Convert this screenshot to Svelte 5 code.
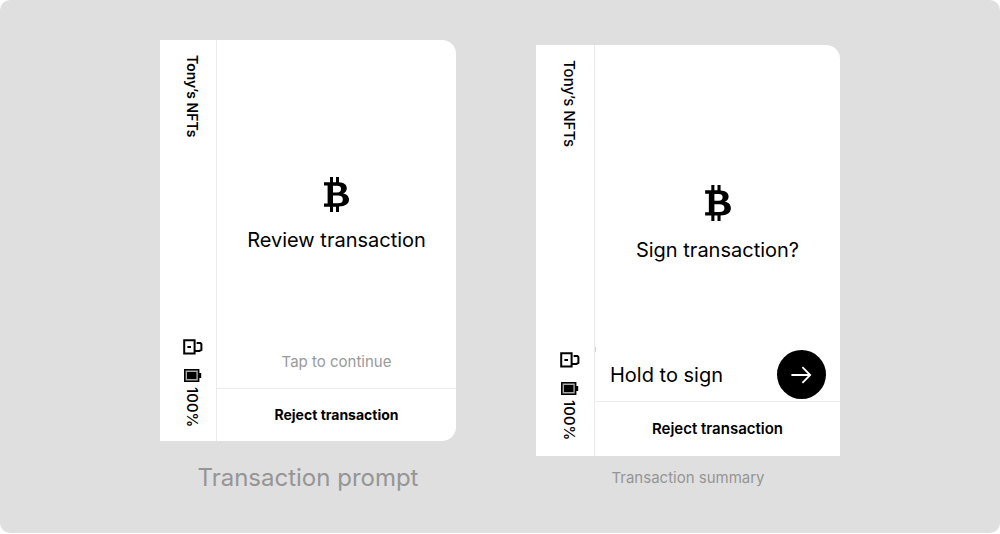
<script>
  const screens = [
    { kind: 'prompt', title: 'Review transaction', caption: 'Transaction prompt' },
    { kind: 'summary', title: 'Sign transaction?', caption: 'Transaction summary' }
  ];
</script>

<main class="stage">
  {#each screens as screen}
    <figure class={screen.kind}>
      <section class="card">
        <aside class="rail">
          <span class="wallet">Tony’s NFTs</span>
          <div class="status">
            <svg class="lock" width="20" height="16" viewBox="0 0 20 16" fill="none" stroke="#000" stroke-width="2" aria-hidden="true">
              <path d="M1.2 1.3H11.6V14.5H1.2Z" />
              <path d="M11.6 12H16.4L18.4 11V5.2L17.4 4H13.6" />
              <path d="M4.4 8H8" />
            </svg>
            <svg class="battery" width="18" height="13" viewBox="0 0 18 13" aria-hidden="true">
              <path d="M.8.8H14.6V12.2H.8Z" fill="#aaa" stroke="#000" stroke-width="1.6" />
              <path d="M3 3H12.4V10H3ZM15 4H17.2V9H15Z" />
            </svg>
            <span class="level">100%</span>
          </div>
        </aside>
        <div class="body">
          <div class="view">
            <div class="hero">
              <svg class="coin" viewBox="0 0 25 35" aria-hidden="true">
                <path
                  fill-rule="evenodd"
                  d="M6 0H9V5.2H12V0H15V5.3C19.8 5.6 22.8 7.6 22.8 11.2C22.8 13.8 21.4 15.6 19 16.4C22.8 17 25 19.2 25 22.6C25 27 21.4 29.4 15 29.6V35H12V29.7H9V35H6V29.7H0V26.4H3.6V8.5H0V5.2H6ZM9 8.7V15.4H13.2C15.8 15.4 17 14.2 17 12C17 9.8 15.8 8.7 13.2 8.7ZM9 18.6V26.2H14C17.2 26.2 18.8 25 18.8 22.4C18.8 19.8 17.2 18.6 14 18.6Z"
                />
              </svg>
              <h2>{screen.title}</h2>
            </div>
            {#if screen.kind === 'prompt'}
              <button class="tap">Tap to continue</button>
            {:else}
              <div class="hold">
                <label for="sign">Hold to sign</label>
                <button id="sign" class="go">
                  <svg width="22" height="18" viewBox="0 0 22 18" fill="none" stroke="#fff" stroke-width="1.8" aria-hidden="true">
                    <path d="M.4 9H19.4M11.4 1.2L19.2 9L11.4 16.8" />
                  </svg>
                </button>
              </div>
            {/if}
          </div>
          <button class="reject">Reject transaction</button>
        </div>
      </section>
      <figcaption>{screen.caption}</figcaption>
    </figure>
  {/each}
</main>

<style>
  :global(body) {
    background: #fff;
    font-family: Inter, sans-serif;
    color: #000;
  }
  .stage {
    box-sizing: border-box;
    min-height: calc(100vh - 1px);
    padding: 40px 24px 32px;
    display: flex;
    flex-wrap: wrap;
    justify-content: center;
    gap: 32px 80px;
    background: #dfdfdf;
    border-radius: 10px;
  }
  figure {
    margin: 0;
    display: flex;
    flex-direction: column;
    flex: 0 1 296px;
  }
  .summary {
    flex-basis: 304px;
    padding-top: 5px;
  }
  .card {
    display: flex;
    min-height: 401px;
    background: #fff;
    border-radius: 0 14px 14px 0;
  }
  .summary .card {
    min-height: 411px;
    border-radius: 0 14px 0 0;
  }
  .rail {
    box-sizing: border-box;
    flex: none;
    width: 57px;
    padding: 15px 0 14px 23px;
    display: flex;
    flex-direction: column;
    align-items: flex-start;
    justify-content: space-between;
    border-right: 1px solid #ebebeb;
  }
  .summary .rail {
    width: 59px;
    padding: 15px 0 16px 24px;
  }
  .wallet,
  .level {
    writing-mode: vertical-rl;
    line-height: 18px;
  }
  .wallet {
    font-size: 14px;
    font-weight: 600;
  }
  .summary .wallet {
    font-size: 15px;
    font-weight: 500;
  }
  .level {
    margin-top: 5px;
    font-size: 15px;
    font-weight: 500;
  }
  .status {
    display: flex;
    flex-direction: column;
    align-items: flex-start;
  }
  .battery {
    margin: 14px 0 0 1px;
  }
  .body {
    flex: 1;
    display: flex;
    flex-direction: column;
  }
  .view {
    flex: 1;
    display: grid;
  }
  .view > :global(*) {
    grid-area: 1 / 1;
  }
  .hero {
    align-self: center;
    display: flex;
    flex-direction: column;
    align-items: center;
    gap: 16px;
  }
  .coin {
    width: 25px;
    height: 35px;
  }
  .summary .hero {
    gap: 17px;
  }
  .summary .coin {
    width: 26px;
    height: 36px;
  }
  h2 {
    margin: 0;
    font-size: 20px;
    line-height: 24px;
    font-weight: 400;
  }
  button {
    border: 0;
    padding: 0;
    background: none;
    color: inherit;
    font: inherit;
    cursor: pointer;
  }
  .tap {
    align-self: end;
    justify-self: center;
    margin-bottom: 16px;
    font-size: 15px;
    line-height: 20px;
    color: #999;
  }
  .hold {
    position: relative;
    align-self: end;
    display: flex;
    align-items: center;
    justify-content: space-between;
    padding: 0 14px 2px 15px;
    font-size: 20px;
    line-height: 24px;
  }
  .hold::before {
    content: '';
    position: absolute;
    left: 0;
    top: -3px;
    width: 1px;
    height: 5px;
    background: #d4d4d4;
  }
  .go {
    display: grid;
    place-items: center;
    width: 49px;
    height: 49px;
    border-radius: 50%;
    background: #000;
  }
  .reject {
    border-top: 1px solid #ebebeb;
    padding: 16px 0;
    font-size: 14px;
    line-height: 20px;
    font-weight: 700;
  }
  .summary .reject {
    padding: 17px 0;
    font-size: 15px;
    font-weight: 600;
  }
  figcaption {
    margin-top: 22px;
    text-align: center;
    font-size: 24px;
    line-height: 30px;
    color: #959595;
  }
  .summary figcaption {
    margin-top: 12px;
    font-size: 15px;
    line-height: 20px;
  }
</style>
